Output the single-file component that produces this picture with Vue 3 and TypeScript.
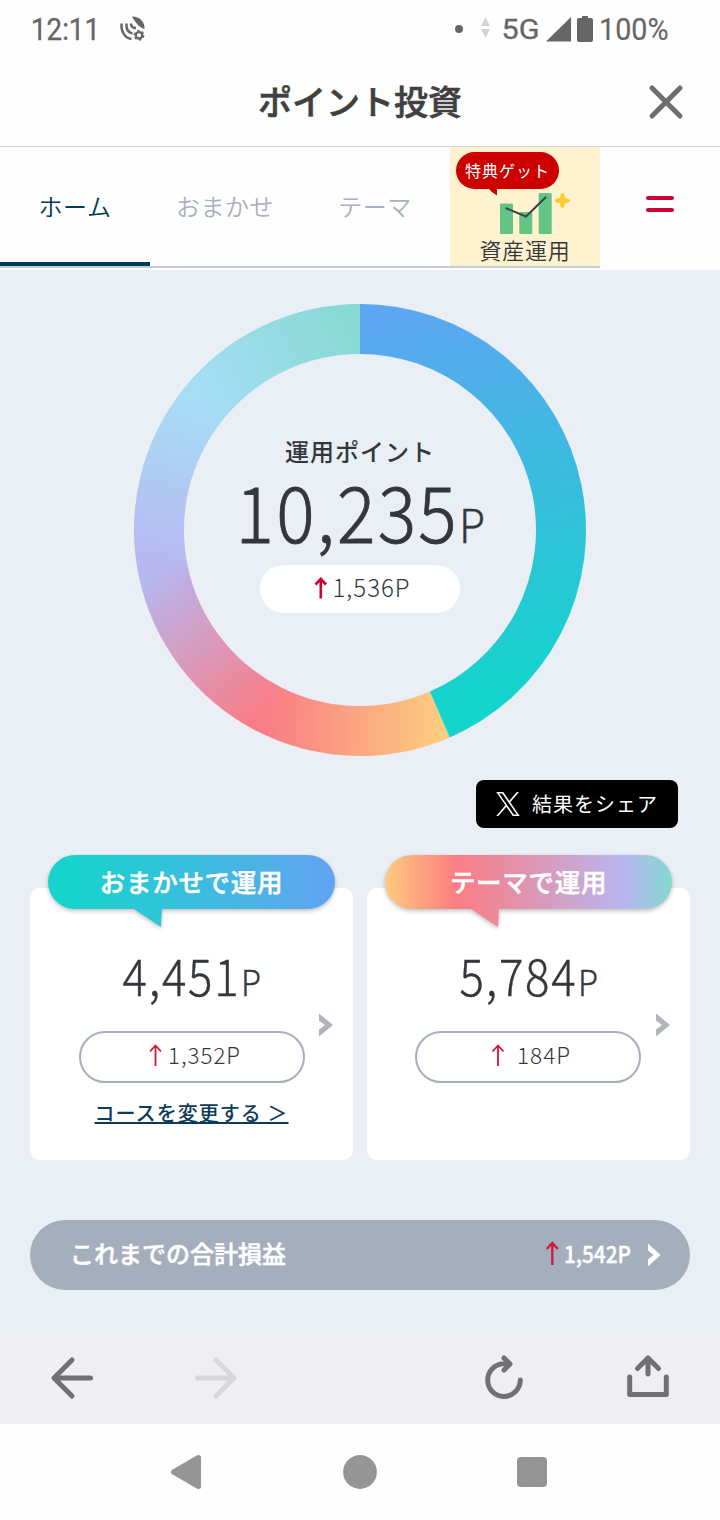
<script setup lang="ts">
interface Card {
  key: string
  title: string
  amount: string
  change: string
  changeX: number
  changeLength: number
  arrowX: number
  link?: string
  stops: { offset: string; color: string }[]
}

const tabs: { label: string; active: boolean }[] = [
  { label: 'ホーム', active: true },
  { label: 'おまかせ', active: false },
  { label: 'テーマ', active: false },
]

const cards: Card[] = [
  {
    key: 'auto',
    title: 'おまかせで運用',
    amount: '4,451',
    change: '1,352P',
    changeX: 87,
    changeLength: 73,
    arrowX: 67,
    link: 'コースを変更する ＞',
    stops: [
      { offset: '0', color: '#13d5cb' },
      { offset: '0.1', color: '#18d3cd' },
      { offset: '0.9', color: '#5ba9ee' },
      { offset: '1', color: '#5fa3f0' },
    ],
  },
  {
    key: 'theme',
    title: 'テーマで運用',
    amount: '5,784',
    change: '184P',
    changeX: 100,
    changeLength: 54,
    arrowX: 73.5,
    stops: [
      { offset: '0', color: '#fdcb7d' },
      { offset: '0.25', color: '#fb7d83' },
      { offset: '0.83', color: '#b9b5ef' },
      { offset: '1', color: '#84dad1' },
    ],
  },
]

// Donut geometry: angles run clockwise from twelve o'clock.
const CX = 226
const R = 201
const split = 156.6

function point(angle: number): [number, number] {
  const t = (angle * Math.PI) / 180
  return [CX + R * Math.sin(t), CX - R * Math.cos(t)]
}

function makeArc(id: string, from: number, to: number, c1: string, c2: string) {
  const [x1, y1] = point(from)
  const [x2, y2] = point(to)
  const large = to - from > 180 ? 1 : 0
  return { id, x1, y1, x2, y2, c1, c2, d: `M${x1} ${y1}A${R} ${R} 0 ${large} 1 ${x2} ${y2}` }
}

const themeColors = ['#fdcb7d', '#f97d86', '#b8b6f0', '#a6def5', '#86d9d3']
const step = (360 - split) / 4
const arcs = [
  ...themeColors
    .slice(0, 4)
    .map((c, i) =>
      makeArc(`t${i}`, split + step * i - (i ? 0.2 : 0), split + step * (i + 1), c, themeColors[i + 1]),
    ),
  makeArc('auto', 0, split, '#5ba7f0', '#13d5cb'),
]
</script>

<template>
  <div class="screen">
    <div class="status">
      <svg class="clock" width="68" height="30">
        <text x="-1" y="25" font-size="31" textLength="69" lengthAdjust="spacingAndGlyphs">12:11</text>
      </svg>
      <svg class="sat" width="26" height="26" viewBox="0 0 26 26">
        <g fill="none" stroke="#666" stroke-width="2.5">
          <path d="M1.500 7.500C1 16 5 22 11.500 23" />
          <path d="M6.500 7.500C6 13 8 16.500 12.500 17.500" />
          <path d="M11 7.500C11 10.500 12.500 12 16 12" />
          <circle cx="19" cy="19.300" r="3.200" stroke-width="2.300" />
          <circle cx="19" cy="19.300" r="4.700" stroke-width="1.400" stroke-dasharray="2.460" />
        </g>
        <path d="M12 .5C20 .5 25 6 24.500 13C20 12 15 6.500 12 .5Z" fill="#666" />
      </svg>
      <svg class="signals" width="214" height="30" viewBox="454 15 214 30">
        <circle cx="459" cy="29" r="4" />
        <path d="M481 26L485.500 17L490 26ZM481 29H490L485.500 38Z" fill="#d2d2d2" />
        <text x="501.500" y="39" font-size="28.500" textLength="38" lengthAdjust="spacingAndGlyphs" stroke="#666" stroke-width=".3">5G</text>
        <path d="M546 41.500L571 17V41.500Z" />
        <path d="M579 18H582V16H588V18H591Q593 18 593 20V40Q593 42 591 42H579Q577 42 577 40V20Q577 18 579 18Z" />
        <text x="599" y="40" font-size="31" textLength="69.500" lengthAdjust="spacingAndGlyphs" stroke="#666" stroke-width=".2">100%</text>
      </svg>
    </div>

    <header class="header">
      <h1>ポイント投資</h1>
      <svg class="close" width="36" height="36" viewBox="0 0 36 36">
        <path d="M4 4L32 32M32 4L4 32" fill="none" stroke="#6e6e6e" stroke-width="5" stroke-linecap="round" />
      </svg>
    </header>

    <nav class="tabs">
      <div v-for="tab in tabs" :key="tab.label" class="tab" :class="{ active: tab.active }">{{ tab.label }}</div>
      <div class="promo">
        <div class="promo-badge">
          特典ゲット
          <svg class="promo-tail" width="10" height="8" viewBox="0 0 10 8"><path d="M0 0H9V7.500Q4 5 0 0Z" fill="#c00" /></svg>
        </div>
        <svg class="chart" width="72" height="44" viewBox="500 191 72 44">
          <g fill="#63c585">
            <rect x="500" y="203.500" width="13" height="30.500" rx="1" />
            <rect x="519.300" y="212" width="13" height="22" rx="1" />
            <rect x="538.700" y="193" width="13" height="41" rx="1" />
          </g>
          <path d="M505.500 208L526 216.500L546 197" fill="none" stroke="#3f4042" stroke-width="2" />
          <path d="M562.500 193Q564.500 193 565 198Q570 198.500 570 200.500Q570 202.500 565 203Q564.500 208 562.500 208Q560.500 208 560 203Q555 202.500 555 200.500Q555 198.500 560 198Q560.500 193 562.500 193Z" fill="#fccb2e" />
        </svg>
        <div class="promo-label">資産運用</div>
      </div>
      <div class="menu"><i></i><i></i></div>
    </nav>

    <main class="main">
      <section class="donut">
        <svg class="ring" width="452" height="452" viewBox="0 0 452 452">
          <defs>
            <linearGradient
              v-for="a in arcs" :id="a.id" :key="a.id" gradientUnits="userSpaceOnUse"
              :x1="a.x1" :y1="a.y1" :x2="a.x2" :y2="a.y2"
            >
              <stop offset="0" :stop-color="a.c1" />
              <stop offset="1" :stop-color="a.c2" />
            </linearGradient>
          </defs>
          <path v-for="a in arcs" :key="a.id" :d="a.d" fill="none" :stroke="`url(#${a.id})`" stroke-width="50" />
        </svg>
        <div class="total">
          <div class="total-label">運用ポイント</div>
          <svg class="num" width="250" height="75" viewBox="235 480 250 75">
            <text class="big" x="235.500" y="542.500" font-size="77.500" letter-spacing="2.500" textLength="223.500" lengthAdjust="spacingAndGlyphs">10,235</text>
            <text class="unit" x="459" y="542.500" font-size="47" textLength="26" lengthAdjust="spacingAndGlyphs">P</text>
          </svg>
          <div class="total-pill">
            <svg class="num" width="100" height="32" viewBox="312 573 100 32">
              <path d="M320.800 598.500V579M315.500 584.500L320.800 579L326 584.500" fill="none" stroke="#d0032f" stroke-width="2.600" />
              <text x="332.500" y="597" font-size="24.500" letter-spacing="1" textLength="78" lengthAdjust="spacingAndGlyphs">1,536P</text>
            </svg>
          </div>
        </div>
      </section>

      <div class="share-row">
        <button class="share">
          <svg width="24" height="24" viewBox="0 0 1200 1227">
            <path fill="#fff" d="M714.163 519.284L1160.890 0H1055.030L667.137 450.887L357.328 0H0L468.492 681.821L0 1226.370H105.866L515.491 750.218L842.672 1226.370H1200L714.137 519.284ZM569.165 687.828L521.697 619.934L144.011 79.694H306.615L611.412 515.685L658.880 583.579L1055.080 1150.300H892.476L569.165 687.854Z" />
          </svg>
          <span>結果をシェア</span>
        </button>
      </div>

      <section class="cards">
        <article v-for="card in cards" :key="card.key" class="card" :class="card.key">
          <div class="bubble">
            <svg class="bubble-bg" width="287" height="73" viewBox="0 0 287 73">
              <defs>
                <linearGradient :id="`b-${card.key}`">
                  <stop v-for="s in card.stops" :key="s.offset" :offset="s.offset" :stop-color="s.color" />
                </linearGradient>
              </defs>
              <path d="M27 0H260A27 27 0 0 1 260 54H114L113 72L86 54H27A27 27 0 0 1 27 0Z" :fill="`url(#b-${card.key})`" />
            </svg>
            <span>{{ card.title }}</span>
          </div>
          <svg class="num amount" width="140" height="52" viewBox="122 952 140 52">
            <text class="mid" x="122.500" y="996" font-size="51" letter-spacing="2" textLength="118" lengthAdjust="spacingAndGlyphs">{{ card.amount }}</text>
            <text class="unit" x="241" y="996" font-size="35.500" textLength="20" lengthAdjust="spacingAndGlyphs">P</text>
          </svg>
          <div class="pill">
            <svg class="num" width="222" height="48" viewBox="0 0 222 48">
              <g :transform="`translate(${card.arrowX} 11)`">
                <path d="M7.500 22V2M2 7.500L7.500 1.500L13 7.500" fill="none" stroke="#d3143b" stroke-width="1.800" />
              </g>
              <text :x="card.changeX" y="31" font-size="22.500" letter-spacing="1" :textLength="card.changeLength" lengthAdjust="spacingAndGlyphs">{{ card.change }}</text>
            </svg>
          </div>
          <a v-if="card.link" class="link">{{ card.link }}</a>
          <svg class="chevron" width="14" height="24" viewBox="0 0 14 24">
            <path d="M0 .5L14 12L0 23.500V16.500L6 12L0 7.500Z" fill="#afb4bd" />
          </svg>
        </article>
      </section>

      <section class="summary">
        <span class="summary-label">これまでの合計損益</span>
        <svg class="num" width="116" height="30" viewBox="545 1239.500 116 30">
          <path d="M552.300 1264.500V1243M546.800 1248.500L552.300 1242.500L557.800 1248.500" fill="none" stroke="#d3143b" stroke-width="2.300" />
          <text class="white" x="564" y="1262" font-size="23" textLength="67" lengthAdjust="spacingAndGlyphs">1,542P</text>
          <path d="M648 1243L660.500 1254.500L648 1266V1259L653.500 1254.500L648 1250Z" fill="#fff" />
        </svg>
      </section>
    </main>

    <div class="toolbar">
      <svg width="44" height="48" viewBox="50 1354 44 48"><path d="M90.500 1378H54M72 1360L54 1378L72 1396" /></svg>
      <svg class="disabled" width="44" height="48" viewBox="194 1354 44 48"><path d="M197.500 1378H234M216 1360L234 1378L216 1396" /></svg>
      <svg class="reload" width="44" height="48" viewBox="482 1354 44 48"><path d="M520.300 1380A16.300 16.300 0 1 1 504 1363.800H509M504 1358L510 1364L504 1370" /></svg>
      <svg width="44" height="48" viewBox="626 1354 44 48"><path d="M629.700 1377V1394.500H666.300V1377M648 1374V1359M637.500 1368.500L648 1358L658.500 1368.500" /></svg>
    </div>

    <div class="system-nav">
      <svg width="34" height="36" viewBox="169 1454 34 36"><path d="M173.500 1472L198.500 1457.500V1486.500Z" fill="#959595" stroke="#959595" stroke-width="5" stroke-linejoin="round" /></svg>
      <svg width="34" height="36" viewBox="342 1454 34 36"><circle cx="360" cy="1472" r="16.900" fill="#959595" /></svg>
      <svg width="34" height="36" viewBox="515 1454 34 36"><rect x="517" y="1457" width="30" height="30" rx="4" fill="#959595" /></svg>
    </div>
  </div>
</template>

<style>
body {
  margin: 0;
}
</style>

<style scoped>
* {
  box-sizing: border-box;
}
.screen {
  width: 720px;
  height: 1520px;
  display: flex;
  flex-direction: column;
  overflow: hidden;
  background: #fefefe;
  font-family: 'Noto Sans CJK JP', sans-serif;
  color: #33373c;
}
svg {
  display: block;
  flex: none;
  overflow: visible;
}
.status {
  height: 58px;
  padding: 15px 52px 0 32px;
  display: flex;
  font-family: Roboto, sans-serif;
}
.status text,
.signals {
  fill: #666;
}
.clock text {
  stroke: #666;
  stroke-width: 0.3px;
}
.sat {
  margin: 1px 0 0 20px;
}
.signals {
  margin-left: auto;
}
.header {
  height: 89px;
  border-bottom: 1px solid #d0d2d3;
  display: grid;
  grid-template-columns: 72px 1fr 72px;
  align-items: center;
}
h1 {
  grid-column: 2;
  margin: -3px 0 0;
  text-align: center;
  font-size: 34px;
  line-height: 44px;
  font-weight: 500;
  -webkit-text-stroke: 0.6px currentColor;
  color: #404040;
}
.close {
  justify-self: center;
  margin-right: 36px;
}
.tabs {
  height: 123px;
  display: flex;
}
.tab {
  width: 150px;
  height: 121px;
  border-bottom: 2px solid #c1cbdc;
  text-align: center;
  font-size: 24px;
  font-weight: 350;
  line-height: 117px;
  letter-spacing: 0.5px;
  color: #a6b0c2;
}
.tab.active {
  color: #003a57;
  box-shadow: inset 0 -4px #003a57;
}
.promo {
  width: 150px;
  height: 121px;
  padding: 5px 6px 0;
  border-bottom: 2px solid #c1cbdc;
  background: #fff2cf;
  display: flex;
  flex-direction: column;
}
.promo-badge {
  position: relative;
  width: 103px;
  height: 37px;
  border-radius: 19px;
  background: #c00;
  color: #fff;
  font-size: 16px;
  line-height: 37px;
  letter-spacing: 1px;
  text-align: center;
}
.promo-tail {
  position: absolute;
  left: 32px;
  top: 36px;
}
.chart {
  margin: 2px 0 0 44px;
}
.promo-label {
  margin-top: -1px;
  text-align: center;
  font-size: 22px;
  font-weight: 350;
  line-height: 30px;
  letter-spacing: 0.7px;
}
.menu {
  margin: 49px 0 0 46px;
  display: flex;
  flex-direction: column;
  gap: 8px;
}
.menu i {
  width: 28px;
  height: 4px;
  border-radius: 2px;
  background: #cc0033;
}
.main {
  height: 1061px;
  padding: 34px 30px 0;
  background: #eaeff6;
}
.donut {
  display: grid;
  justify-content: center;
}
.ring,
.total {
  grid-area: 1 / 1;
}
.total {
  display: flex;
  flex-direction: column;
  align-items: center;
  padding-top: 130px;
}
.total-label {
  font-size: 24px;
  line-height: 34px;
  letter-spacing: 1px;
  font-weight: 500;
}
.total > .num {
  margin-top: 12px;
}
.total-pill {
  width: 200px;
  height: 48px;
  margin-top: 10px;
  padding: 8px 0 0 52px;
  border-radius: 24px;
  background: #fff;
}
.num text {
  fill: #33373c;
  font-weight: 300;
}
.num .big {
  stroke: #33373c;
  stroke-width: 0.8px;
}
.num .mid,
.num .unit {
  stroke: #33373c;
  stroke-width: 0.4px;
}
.num .white {
  fill: #fff;
  font-weight: 500;
  stroke: #fff;
  stroke-width: 0.4px;
}
.share-row {
  display: flex;
  justify-content: flex-end;
  margin: 24px 12px 0 0;
}
.share {
  width: 202px;
  height: 48px;
  padding: 0 0 0 20px;
  border: 0;
  border-radius: 8px;
  background: #000;
  color: #fff;
  display: flex;
  align-items: center;
  gap: 12px;
  font-family: inherit;
  font-size: 20px;
  letter-spacing: 1px;
}
.share span {
  margin-top: -1px;
}
.cards {
  display: flex;
  gap: 14px;
  margin-top: 60px;
}
.card {
  position: relative;
  width: 323px;
  height: 272px;
  border-radius: 10px;
  background: #fff;
  display: flex;
  flex-direction: column;
  align-items: center;
}
.bubble {
  position: relative;
  width: 287px;
  height: 54px;
  margin-top: -33px;
  text-align: center;
  color: #fff;
  font-size: 25.5px;
  line-height: 52px;
  letter-spacing: 0.7px;
  font-weight: 500;
  -webkit-text-stroke: 0.5px currentColor;
}
.bubble-bg {
  position: absolute;
  inset: 0;
  filter: drop-shadow(0 2px 2px rgba(0, 0, 0, 0.25));
}
.bubble span {
  position: relative;
}
.amount {
  margin-top: 43px;
}
.pill {
  width: 226px;
  height: 52px;
  margin-top: 27px;
  border: 2px solid #a4aebf;
  border-radius: 26px;
}
.theme .pill {
  margin-right: 1px;
}
.link {
  margin-top: 16px;
  font-size: 20px;
  line-height: 28px;
  letter-spacing: 1.05px;
  font-weight: 500;
  color: #0c3a58;
  text-decoration: underline;
  text-decoration-thickness: 2px;
}
.chevron {
  position: absolute;
  right: 20px;
  top: 125px;
}
.summary {
  height: 70px;
  margin-top: 60px;
  padding: 0 29px 0 40px;
  border-radius: 35px;
  background: #a5aebd;
  display: flex;
  align-items: center;
  justify-content: space-between;
}
.summary-label {
  margin-top: -5px;
  font-size: 24px;
  line-height: 34px;
  font-weight: 500;
  -webkit-text-stroke: 0.5px currentColor;
  color: #fff;
}
.toolbar {
  height: 93px;
  padding: 23px 50px 0;
  background: #efeff3;
  display: flex;
}
.toolbar path {
  fill: none;
  stroke: #717171;
  stroke-width: 5px;
  stroke-linecap: round;
  stroke-linejoin: round;
}
.toolbar .disabled {
  margin-left: 100px;
}
.toolbar .disabled path {
  stroke: #d8d8d8;
}
.toolbar .reload {
  margin-left: auto;
  margin-right: 100px;
}
.system-nav {
  height: 96px;
  padding: 30px 171px 0 169px;
  display: flex;
  justify-content: space-between;
}
</style>
